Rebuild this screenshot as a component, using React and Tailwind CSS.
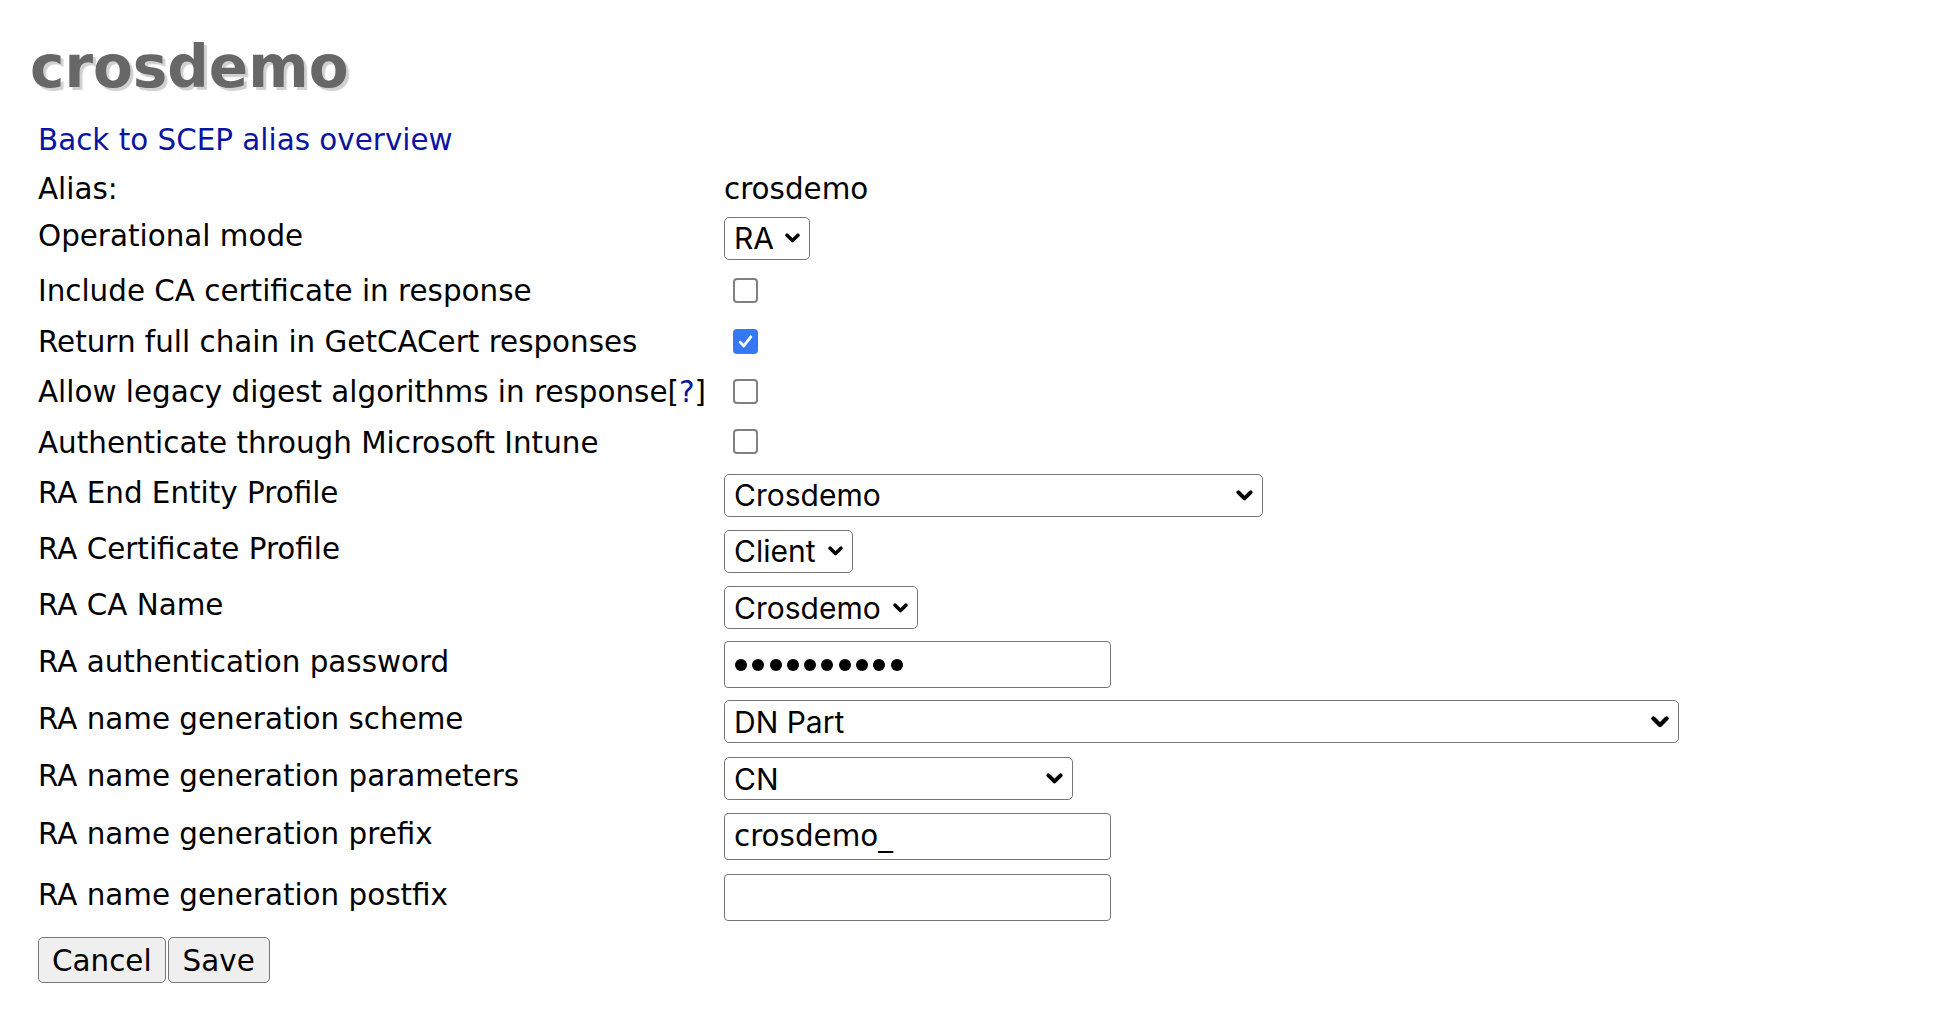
import React from 'react';

const Chevron = ({ w = 15 }) => (
  <svg width={w} height={Math.round(w * 0.66)} viewBox="0 0 16 10.5" fill="none" className="shrink-0">
    <path d="M2.2 2.2 L8 8 L13.8 2.2" stroke="#000" strokeWidth="3.8" strokeLinecap="round" strokeLinejoin="round" />
  </svg>
);

function FakeSelect({ value, width, chevronW }) {
  return (
    <div
      className="h-[43px] flex items-center justify-between pl-[9px] pr-[9px] border border-[#767676] rounded-[5px] bg-white font-['Inter','Liberation_Sans',sans-serif] text-[30px] leading-none"
      style={{ width }}
    >
      <span>{value}</span>
      <Chevron w={chevronW} />
    </div>
  );
}

function Checkbox({ checked }) {
  if (checked) {
    return (
      <div className="ml-[9px] w-[25px] h-[25px] rounded-[4px] bg-[#3478f6] flex items-center justify-center">
        <svg width="17" height="17" viewBox="0 0 16 16" fill="none">
          <path d="M3 8.6 L6.4 12.2 L13 3.6" stroke="#fff" strokeWidth="2.6" strokeLinecap="round" strokeLinejoin="round" />
        </svg>
      </div>
    );
  }
  return <div className="ml-[9px] w-[25px] h-[25px] rounded-[4px] border-[2px] border-[#808080] bg-white" />;
}

function TextBox({ children }) {
  return (
    <div className="w-[387px] h-[47px] flex items-center px-[9px] border border-[#767676] rounded-[4px] bg-white">
      {children}
    </div>
  );
}

function Row({ label, h, lift, children }) {
  return (
    <div className="flex items-center" style={{ height: h }}>
      <div className={`w-[686px] shrink-0 leading-[36px] ${lift ? 'pb-[5px]' : 'pt-[2px]'}`}>{label}</div>
      <div className="flex items-center">{children}</div>
    </div>
  );
}

export default function App() {
  return (
    <div className="min-h-screen bg-white text-black font-['DejaVu_Sans',Verdana,sans-serif] text-[29.4px]">
      <h1 className="pl-[30px] pt-[38px] text-[58px] leading-[58px] font-bold text-[#676767] [text-shadow:3px_3px_1px_#d0d0d0]">
        crosdemo
      </h1>

      <div className="mt-[19px] pl-[38px]">
        <div className="h-[48px] flex items-center leading-[36px] pt-[2px]">
          <a href="#" className="text-[#0a14a0]">Back to SCEP alias overview</a>
        </div>

        <Row label="Alias:" h={49}>
          <span className="leading-[36px] pt-[2px]">crosdemo</span>
        </Row>
        <Row label="Operational mode" h={52} lift>
          <FakeSelect value="RA" width={86} chevronW={15} />
        </Row>
        <Row label="Include CA certificate in response" h={52}>
          <Checkbox />
        </Row>
        <Row label="Return full chain in GetCACert responses" h={50}>
          <Checkbox checked />
        </Row>
        <Row
          label={<>Allow legacy digest algorithms in response[<a href="#" className="text-[#0a14a0]">?</a>]</>}
          h={50}
        >
          <Checkbox />
        </Row>
        <Row label="Authenticate through Microsoft Intune" h={51}>
          <Checkbox />
        </Row>
        <Row label="RA End Entity Profile" h={56} lift>
          <FakeSelect value="Crosdemo" width={539} chevronW={17} />
        </Row>
        <Row label="RA Certificate Profile" h={56} lift>
          <FakeSelect value="Client" width={129} chevronW={15} />
        </Row>
        <Row label="RA CA Name" h={57} lift>
          <FakeSelect value="Crosdemo" width={194} chevronW={15} />
        </Row>
        <Row label="RA authentication password" h={57} lift>
          <TextBox>
            <div className="flex items-center gap-[5.3px] pl-[1px]">
              {Array.from({ length: 10 }).map((_, i) => (
                <span key={i} className="w-[12px] h-[12px] rounded-full bg-black" />
              ))}
            </div>
          </TextBox>
        </Row>
        <Row label="RA name generation scheme" h={57} lift>
          <FakeSelect value="DN Part" width={955} chevronW={18} />
        </Row>
        <Row label="RA name generation parameters" h={57} lift>
          <FakeSelect value="CN" width={349} chevronW={17} />
        </Row>
        <Row label="RA name generation prefix" h={59} lift>
          <TextBox>
            <span className="leading-none">crosdemo_</span>
          </TextBox>
        </Row>
        <Row label="RA name generation postfix" h={62} lift>
          <TextBox />
        </Row>

        <div className="h-[64px] flex items-center gap-[2px]">
          <button className="h-[46px] px-[13px] border border-[#767676] rounded-[5px] bg-[#efefef] leading-none pt-[3px]">
            Cancel
          </button>
          <button className="h-[46px] px-[14px] border border-[#767676] rounded-[5px] bg-[#efefef] leading-none pt-[3px]">
            Save
          </button>
        </div>
      </div>
    </div>
  );
}
